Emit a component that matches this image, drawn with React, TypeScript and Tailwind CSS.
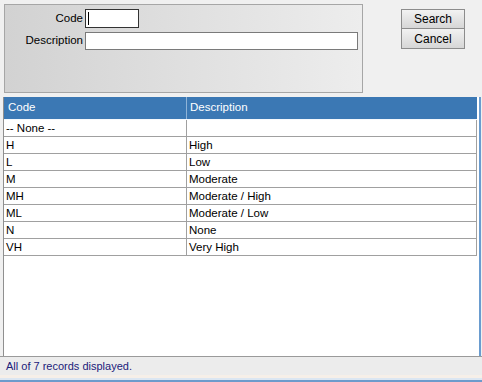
const rows = [
  { code: '-- None --', desc: '' },
  { code: 'H', desc: 'High' },
  { code: 'L', desc: 'Low' },
  { code: 'M', desc: 'Moderate' },
  { code: 'MH', desc: 'Moderate / High' },
  { code: 'ML', desc: 'Moderate / Low' },
  { code: 'N', desc: 'None' },
  { code: 'VH', desc: 'Very High' },
];

export default function App() {
  return (
    <div className="w-[482px] h-[382px] bg-[#f0f0f0] flex flex-col overflow-hidden text-[11.5px] text-black font-['Liberation_Sans',Arial,sans-serif]">
      {/* filter panel + buttons */}
      <div className="flex pt-[4px] pl-[4px]">
        <div className="w-[359px] h-[89px] border border-[#a6a6a6] bg-gradient-to-r from-[#d2d2d2] to-[#ededed] pt-[4px]">
          <div className="flex items-center h-[19px]">
            <span className="w-[80px] text-right pr-[2px]">Code</span>
            <div className="w-[54px] h-[19px] border border-[#333] bg-white flex items-center pl-[2px]">
              <div className="w-px h-[13px] bg-black" />
            </div>
          </div>
          <div className="flex items-center h-[18px] mt-[4px]">
            <span className="w-[80px] text-right pr-[2px]">Description</span>
            <div className="w-[273px] h-[18px] border border-[#7a7a7a] bg-white" />
          </div>
        </div>
        <div className="flex flex-col ml-[38px] mt-[5px]">
          <button className="w-[64px] h-[20px] border border-[#8c8c8c] bg-gradient-to-b from-[#f2f2f2] to-[#d6d6d6] text-[12px] leading-none">
            Search
          </button>
          <button className="w-[64px] h-[20px] border border-[#8c8c8c] border-t-0 bg-gradient-to-b from-[#f2f2f2] to-[#d6d6d6] text-[12px] leading-none">
            Cancel
          </button>
        </div>
      </div>

      {/* grid */}
      <div className="mt-[4px] ml-[3px] w-[478px] h-[260px] border-l border-[#8f8f8f] border-r-2 border-r-[#6a9ccf] bg-white flex flex-col">
        <div className="flex h-[23px] shrink-0 bg-[#3b78b4] text-white mr-[2px] border-b border-[#f4f8fc]">
          <div className="w-[183px] pl-[4px] flex items-center border-r border-[#8fb4d8]">Code</div>
          <div className="flex-1 pl-[3px] flex items-center">Description</div>
        </div>
        {rows.map((r, i) => (
          <div key={i} className="flex h-[17px] shrink-0 border-b border-r border-[#a0a0a0] mr-[2px]">
            <div className="w-[183px] pl-[2px] pt-[2px] flex items-center border-r border-[#a0a0a0]">{r.code}</div>
            <div className="flex-1 pl-[2px] pt-[2px] flex items-center">{r.desc}</div>
          </div>
        ))}
      </div>

      {/* status bar */}
      <div className="border-t border-[#9a9a9a] h-[19px] bg-[#ececec] flex items-center pl-[6px] text-[11px] text-[#20207a]">
        All of 7 records displayed.
      </div>
      <div className="h-[3px] bg-[#f6efe8]" />
      <div className="h-[2px] bg-[#dbe6f2]" />
      <div className="h-[2px] bg-[#6d9bcc]" />
      <div className="flex-1 bg-[#dbe6f2]" />
    </div>
  );
}
